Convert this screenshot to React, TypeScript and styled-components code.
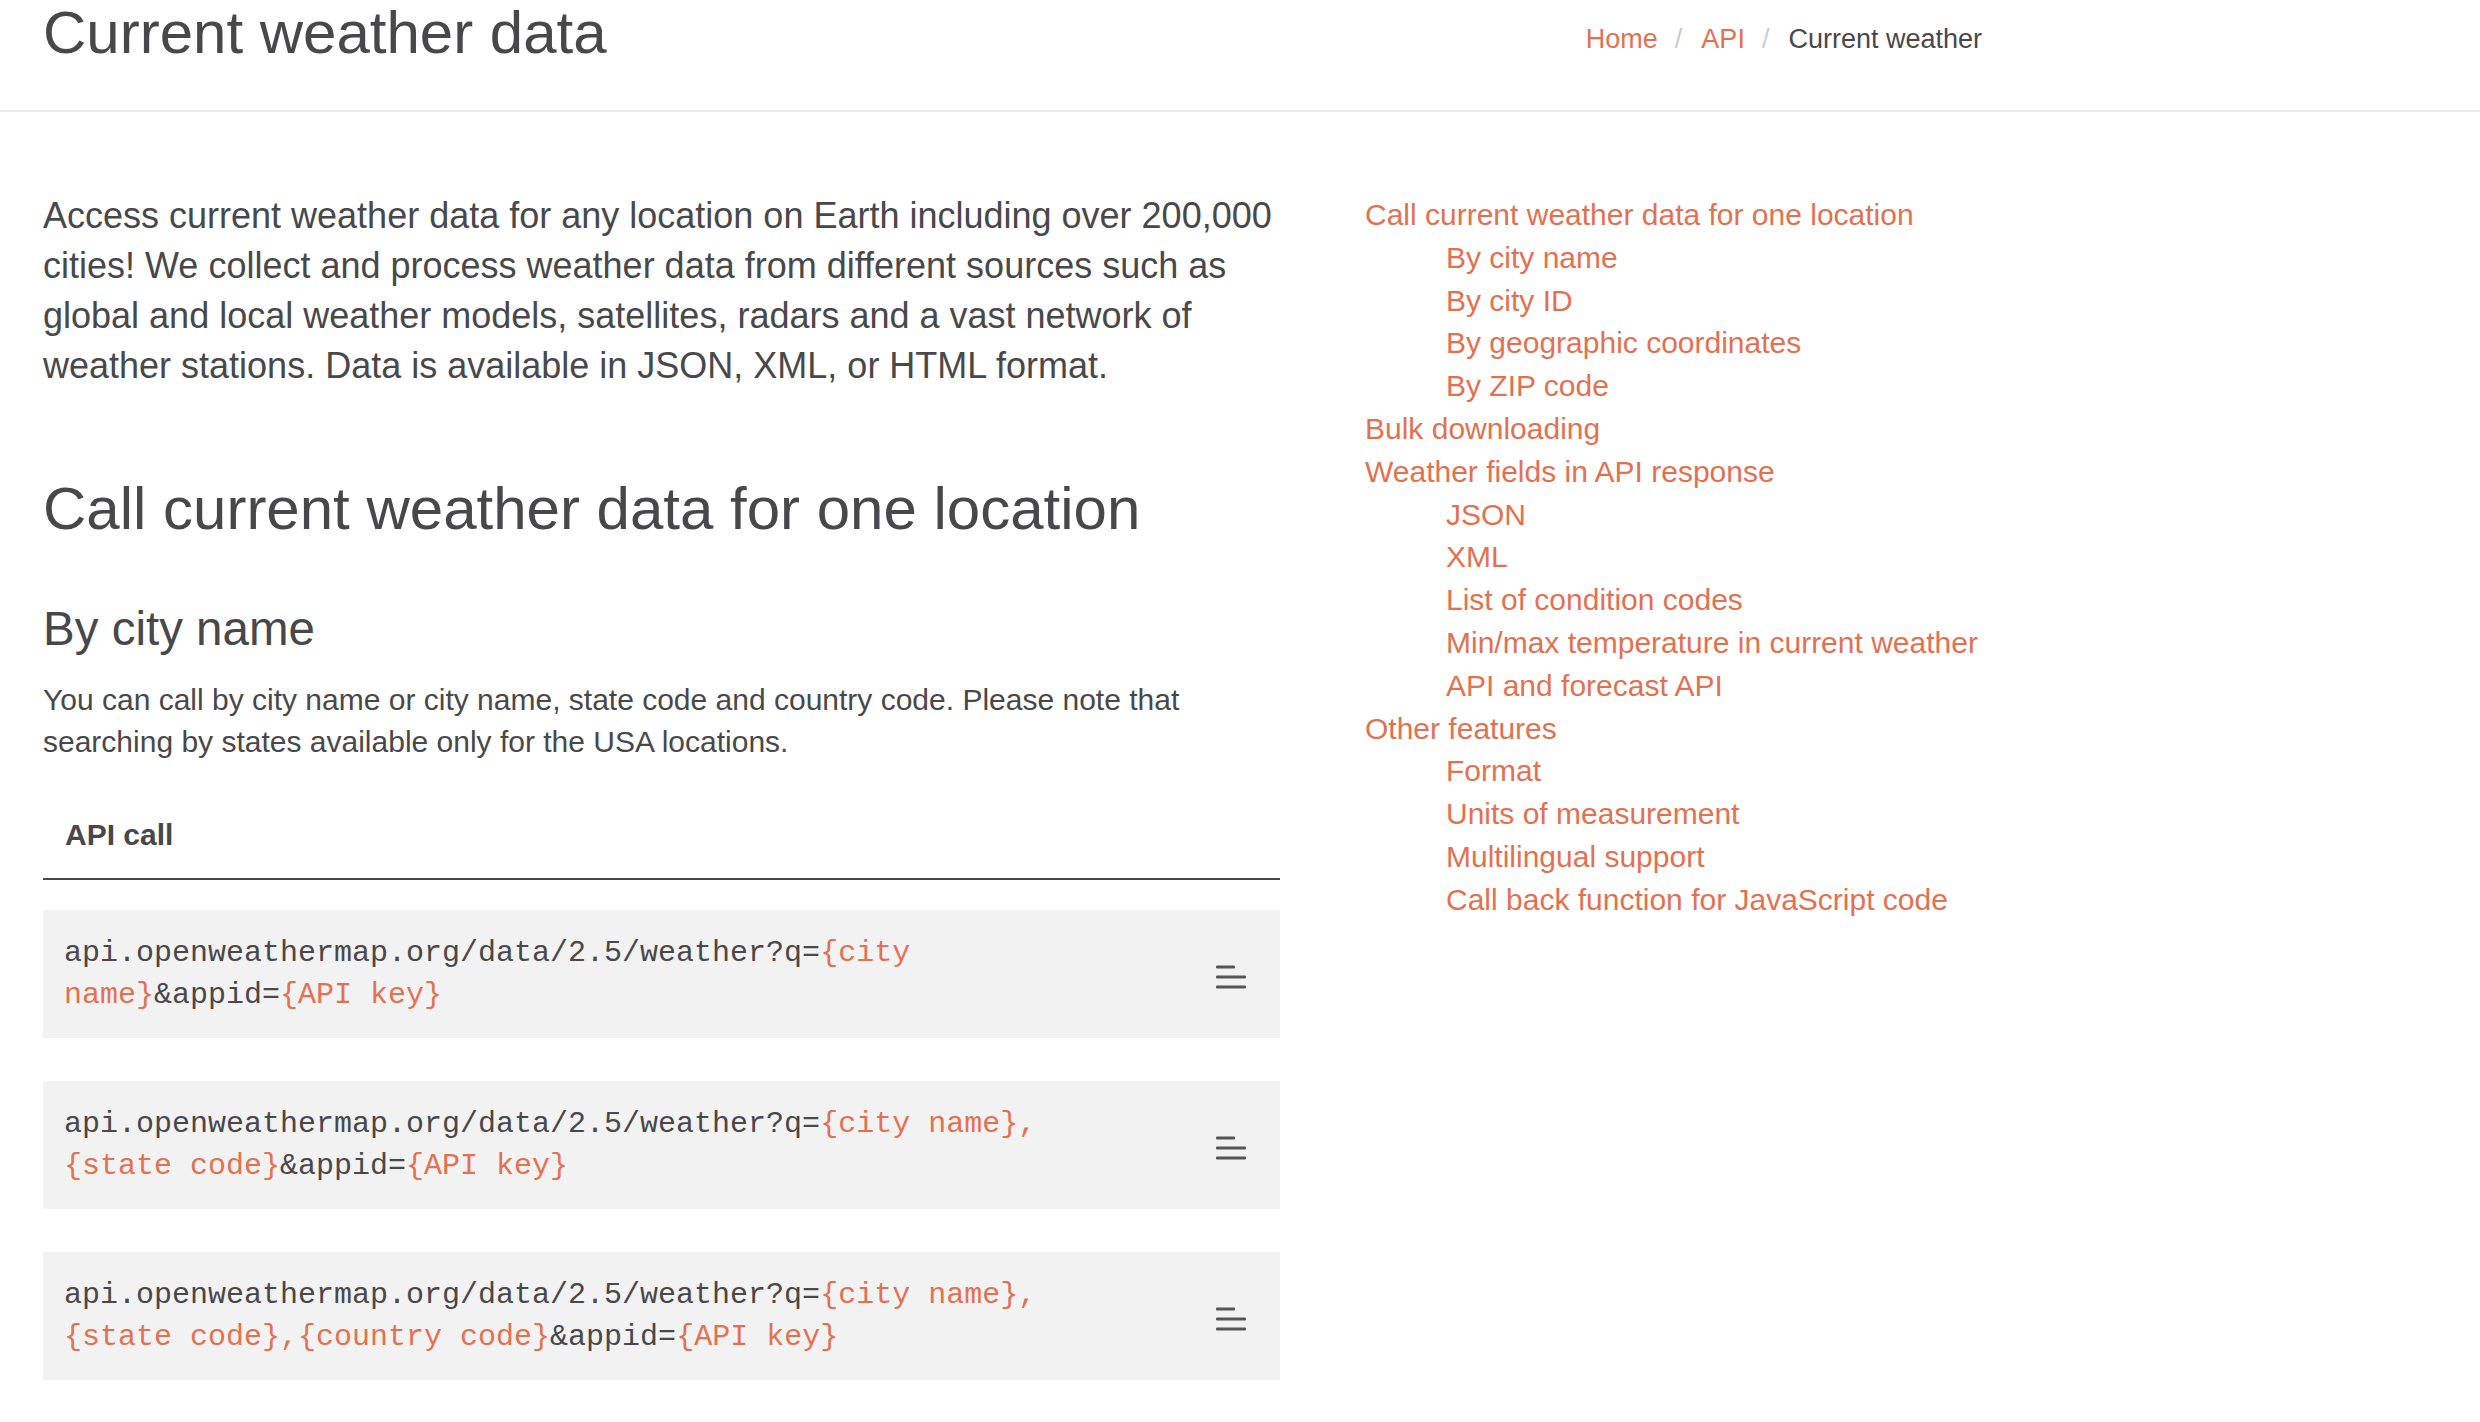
import React from "react";
import styled, { createGlobalStyle } from "styled-components";

const GlobalStyle = createGlobalStyle`
  html, body { margin: 0; padding: 0; background: #ffffff; }
  body {
    font-family: "Liberation Sans", Arial, Helvetica, sans-serif;
    color: #48484a;
  }
  * { box-sizing: border-box; }
`;

const ORANGE = "#e27152";
const TEXT = "#48484a";

const Header = styled.header`
  height: 112px;
  border-bottom: 2px solid #ebebeb;
`;

const HeaderInner = styled.div`
  width: 1982px;
  padding-left: 43px;
  display: flex;
  justify-content: space-between;
  align-items: flex-start;
`;

const Title = styled.h1`
  margin: 0;
  font-size: 60px;
  line-height: 66px;
  font-weight: 400;
  color: ${TEXT};
`;

const Crumbs = styled.ol`
  list-style: none;
  margin: 20px 0 0;
  padding: 0;
  display: flex;
  font-size: 27px;
  line-height: 38px;

  li + li::before {
    content: "/";
    color: #cccccc;
    padding: 0 19px 0 17px;
  }
`;

const Crumb = styled.li<{ $active?: boolean }>`
  color: ${(p) => (p.$active ? TEXT : ORANGE)};
`;

const Layout = styled.div`
  display: grid;
  grid-template-columns: 1237px 640px;
  column-gap: 85px;
  padding: 79px 0 40px 43px;
  align-items: start;
`;

const Main = styled.main`
  display: flex;
  flex-direction: column;
`;

const Intro = styled.p`
  margin: 0;
  font-size: 36px;
  line-height: 50px;
`;

const SectionTitle = styled.h2`
  margin: 85px 0 0;
  font-size: 60px;
  line-height: 66px;
  font-weight: 400;
`;

const SubTitle = styled.h3`
  margin: 61px 0 0;
  font-size: 47.5px;
  line-height: 52px;
  font-weight: 400;
`;

const Text = styled.p`
  margin: 24px 0 0;
  font-size: 30px;
  line-height: 42px;
`;

const CallTable = styled.table`
  margin-top: 29px;
  width: 100%;
  border-collapse: separate;
  border-spacing: 0;
`;

const CallHead = styled.th`
  text-align: left;
  padding: 22px 22px;
  font-size: 30px;
  line-height: 42px;
  font-weight: 700;
  color: ${TEXT};
  border-bottom: 2px solid ${TEXT};
`;

const CodeList = styled.div`
  margin-top: 30px;
  display: flex;
  flex-direction: column;
  gap: 43px;
`;

const CodeBox = styled.div`
  display: flex;
  align-items: center;
  justify-content: space-between;
  background: #f2f2f2;
  padding: 22px 34px 22px 21px;
`;

const Code = styled.code`
  font-family: "Liberation Mono", "Courier New", monospace;
  font-size: 30px;
  line-height: 42px;
  color: ${TEXT};
`;

const CodeLine = styled.span`
  display: block;
  white-space: pre;
`;

const Param = styled.span`
  color: ${ORANGE};
`;

const IconWrap = styled.span`
  display: flex;
  margin-top: 6px;
`;

const Sidebar = styled.aside`
  padding-top: 3px;
`;

const Toc = styled.ul<{ $nested?: boolean }>`
  list-style: none;
  margin: 0;
  padding: 0 0 0 ${(p) => (p.$nested ? "81px" : "0")};
  font-size: 30px;
  line-height: 42.8px;
`;

const TocLink = styled.a`
  color: ${ORANGE};
  text-decoration: none;
`;

type Seg = { t: string; p?: boolean };

const codes: Seg[][][] = [
  [
    [{ t: "api.openweathermap.org/data/2.5/weather?q=" }, { t: "{city", p: true }],
    [{ t: "name}", p: true }, { t: "&appid=" }, { t: "{API key}", p: true }],
  ],
  [
    [{ t: "api.openweathermap.org/data/2.5/weather?q=" }, { t: "{city name},", p: true }],
    [{ t: "{state code}", p: true }, { t: "&appid=" }, { t: "{API key}", p: true }],
  ],
  [
    [{ t: "api.openweathermap.org/data/2.5/weather?q=" }, { t: "{city name},", p: true }],
    [
      { t: "{state code},{country code}", p: true },
      { t: "&appid=" },
      { t: "{API key}", p: true },
    ],
  ],
];

const toc: { label: string; children?: string[] }[] = [
  {
    label: "Call current weather data for one location",
    children: ["By city name", "By city ID", "By geographic coordinates", "By ZIP code"],
  },
  { label: "Bulk downloading" },
  {
    label: "Weather fields in API response",
    children: [
      "JSON",
      "XML",
      "List of condition codes",
      "Min/max temperature in current weather",
      "API and forecast API",
    ],
  },
  {
    label: "Other features",
    children: [
      "Format",
      "Units of measurement",
      "Multilingual support",
      "Call back function for JavaScript code",
    ],
  },
];

const LinesIcon = () => (
  <svg width="30" height="26" viewBox="0 0 30 26" aria-hidden="true">
    <rect x="0" y="1.5" width="19" height="3" rx="1" fill="#555" />
    <rect x="0" y="11.5" width="30" height="3" rx="1" fill="#555" />
    <rect x="0" y="21.5" width="30" height="3" rx="1" fill="#555" />
  </svg>
);

export default function App() {
  return (
    <>
      <GlobalStyle />
      <Header>
        <HeaderInner>
          <Title>Current weather data</Title>
          <Crumbs>
            <Crumb>Home</Crumb>
            <Crumb>API</Crumb>
            <Crumb $active>Current weather</Crumb>
          </Crumbs>
        </HeaderInner>
      </Header>
      <Layout>
        <Main>
          <Intro>
            Access current weather data for any location on Earth including over 200,000
            cities! We collect and process weather data from different sources such as
            global and local weather models, satellites, radars and a vast network of
            weather stations. Data is available in JSON, XML, or HTML format.
          </Intro>
          <SectionTitle>Call current weather data for one location</SectionTitle>
          <SubTitle>By city name</SubTitle>
          <Text>
            You can call by city name or city name, state code and country code. Please note
            that searching by states available only for the USA locations.
          </Text>
          <CallTable>
            <thead>
              <tr>
                <CallHead>API call</CallHead>
              </tr>
            </thead>
          </CallTable>
          <CodeList>
            {codes.map((lines, i) => (
              <CodeBox key={i}>
                <Code>
                  {lines.map((segs, j) => (
                    <CodeLine key={j}>
                      {segs.map((s, k) =>
                        s.p ? <Param key={k}>{s.t}</Param> : <React.Fragment key={k}>{s.t}</React.Fragment>
                      )}
                    </CodeLine>
                  ))}
                </Code>
                <IconWrap>
                  <LinesIcon />
                </IconWrap>
              </CodeBox>
            ))}
          </CodeList>
        </Main>
        <Sidebar>
          <Toc>
            {toc.map((item) => (
              <li key={item.label}>
                <TocLink href="#">{item.label}</TocLink>
                {item.children && (
                  <Toc $nested>
                    {item.children.map((c) => (
                      <li key={c}>
                        <TocLink href="#">{c}</TocLink>
                      </li>
                    ))}
                  </Toc>
                )}
              </li>
            ))}
          </Toc>
        </Sidebar>
      </Layout>
    </>
  );
}
